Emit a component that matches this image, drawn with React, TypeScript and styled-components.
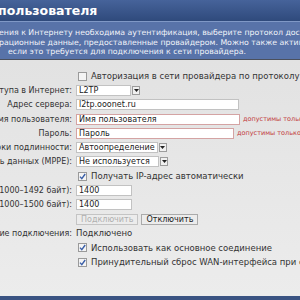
import React, { FC } from 'react'
import styled, { createGlobalStyle } from 'styled-components'

const GlobalStyle = createGlobalStyle`
  html, body {
    margin: 0;
    padding: 0;
  }
  body {
    width: 300px;
    height: 300px;
    overflow: hidden;
    background: #e4e4e4;
  }
`

type Row = {
  label?: string
  content: React.ReactNode
}

const Check: FC<{ checked?: boolean; text: string }> = ({ checked, text }) => (
  <CheckLine>
    <Box>
      {checked && (
        <svg width='7' height='7' viewBox='0 0 7 7'>
          <path d='M1 3.6 L2.8 5.6 L6.2 1' fill='none' stroke='#3a5fa8' strokeWidth='1.4' />
        </svg>
      )}
    </Box>
    <span>{text}</span>
  </CheckLine>
)

const Select: FC<{ width: number; value: string }> = ({ width, value }) => (
  <SelectBox $width={width}>
    <SelectValue>{value}</SelectValue>
    <ArrowBox>
      <svg width='5' height='3' viewBox='0 0 5 3'>
        <path d='M0 0 H5 L2.5 3 Z' fill='#222' />
      </svg>
    </ArrowBox>
  </SelectBox>
)

const buildRows = (): Row[] => [
  { content: <Check text='Авторизация в сети провайдера по протоколу 802.1x' /> },
  { label: 'Тип доступа в Интернет:', content: <Select width={64} value='L2TP' /> },
  { label: 'Адрес сервера:', content: <Input $width={163} defaultValue='l2tp.ooonet.ru' /> },
  {
    label: 'Имя пользователя:',
    content: (
      <>
        <Input $width={164} $invalid defaultValue='Имя пользователя' />
        <Hint>допустимы только цифры и латинские буквы</Hint>
      </>
    ),
  },
  {
    label: 'Пароль:',
    content: (
      <>
        <Input $width={158} $invalid defaultValue='Пароль' />
        <Hint>допустимы только цифры и латинские буквы</Hint>
      </>
    ),
  },
  { label: 'Метод проверки подлинности:', content: <Select width={82} value='Автоопределение' /> },
  { label: 'Конфиденциальность данных (MPPE):', content: <Select width={92} value='Не используется' /> },
  { content: <Check checked text='Получать IP-адрес автоматически' /> },
  { label: 'Размер MTU (1000–1492 байт):', content: <Input $width={56} defaultValue='1400' /> },
  { label: 'Размер MRU (1000–1500 байт):', content: <Input $width={56} defaultValue='1400' /> },
  {
    content: (
      <>
        <Button disabled>Подключить</Button>
        <Button>Отключить</Button>
      </>
    ),
  },
  { label: 'Состояние подключения:', content: <Status>Подключено</Status> },
  { content: <Check checked text='Использовать как основное соединение' /> },
  { content: <Check checked text='Принудительный сброс WAN-интерфейса при ошибке' /> },
]

const App: FC = () => {
  const rows = buildRows()
  return (
    <Page>
      <GlobalStyle />
      <Header>пользователя</Header>
      <Desc>
        <DescLine>ения к Интернету необходима аутентификация, выберите протокол доступа</DescLine>
        <DescLine>рационные данные, предоставленные провайдером. Можно также активировать</DescLine>
        <DescLine $indent={8}>если это требуется для подключения к сети провайдера.</DescLine>
      </Desc>
      <Form>
        <Grid>
          {rows.map((row, i) => (
            <React.Fragment key={i}>
              <Label>
                <span>{row.label}</span>
              </Label>
              <Cell>{row.content}</Cell>
            </React.Fragment>
          ))}
        </Grid>
      </Form>
      <Footer />
    </Page>
  )
}

const Page = styled.div`
  width: 300px;
  height: 300px;
  overflow: hidden;
  display: flex;
  flex-direction: column;
  font-family: 'DejaVu Sans', Verdana, sans-serif;
  font-size: 8px;
  color: #333;
`

const Header = styled.div`
  flex: none;
  height: 21px;
  line-height: 22px;
  background: linear-gradient(#46639a, #2f4a7c);
  color: #fff;
  font-weight: bold;
  font-size: 12.5px;
  white-space: nowrap;
  text-indent: -2px;
`

const Desc = styled.div`
  flex: none;
  height: 31px;
  padding-top: 6px;
  background: #5873a9;
  border-top: 1px solid #7f98c6;
  border-bottom: 1px solid #4b505c;
  color: #f2f4fa;
  font-size: 7.8px;
`

const DescLine = styled.div<{ $indent?: number }>`
  white-space: nowrap;
  line-height: 9.5px;
  padding-left: ${(p) => p.$indent || 0}px;
  text-indent: ${(p) => (p.$indent ? 0 : -1)}px;
`

const Form = styled.div`
  flex: 1;
  padding-top: 9px;
  background: linear-gradient(#e2e2e2, #ececec);
  overflow: hidden;
`

const Grid = styled.div`
  display: grid;
  grid-template-columns: 72px 1fr;
  column-gap: 4px;
  grid-auto-rows: 14.3px;
  align-items: center;
`

const Label = styled.div`
  display: flex;
  justify-content: flex-end;
  overflow: hidden;
  white-space: nowrap;

  span {
    flex: none;
  }
`

const Cell = styled.div`
  display: flex;
  align-items: center;
  gap: 3px;
  white-space: nowrap;
`

const CheckLine = styled.div`
  display: flex;
  align-items: center;
  gap: 4px;
  padding-left: 2px;
  font-size: 8.5px;
`

const Box = styled.span`
  width: 7px;
  height: 7px;
  border: 1px solid #9a9a9a;
  background: #f4f4f4;
  display: flex;
  align-items: center;
  justify-content: center;
`

const Input = styled.input<{ $width: number; $invalid?: boolean }>`
  box-sizing: border-box;
  width: ${(p) => p.$width}px;
  height: 11px;
  padding: 0 2px;
  margin: 0;
  border: 1px solid ${(p) => (p.$invalid ? '#d4a3a3' : '#c2c2c2')};
  background: #fff;
  font-family: inherit;
  font-size: 8px;
  color: #222;
  outline: none;
`

const Hint = styled.span`
  color: #c23a3a;
  font-size: 6.5px;
`

const SelectBox = styled.div<{ $width: number }>`
  display: flex;
  align-items: center;
  width: ${(p) => p.$width}px;
  height: 11px;
  gap: 1px;
`

const SelectValue = styled.span`
  flex: 1;
  box-sizing: border-box;
  height: 11px;
  line-height: 9px;
  padding: 0 2px;
  border: 1px solid #c2c2c2;
  background: #fff;
  color: #222;
`

const ArrowBox = styled.span`
  flex: none;
  box-sizing: border-box;
  width: 8px;
  height: 9px;
  border: 1px solid #9c9c9c;
  background: #f0f0f0;
  display: flex;
  align-items: center;
  justify-content: center;
`

const Button = styled.button`
  box-sizing: border-box;
  height: 11px;
  padding: 0 4px;
  margin: 0;
  border: 1px solid #aaa;
  background: #ececec;
  font-family: inherit;
  font-size: 8px;
  line-height: 9px;
  color: #222;

  &:disabled {
    color: #b0b0b0;
    border-color: #c4c4c4;
  }
`

const Status = styled.span`
  font-size: 8.5px;
`

const Footer = styled.div`
  flex: none;
  height: 4px;
  background: #3a5382;
`

export default App
